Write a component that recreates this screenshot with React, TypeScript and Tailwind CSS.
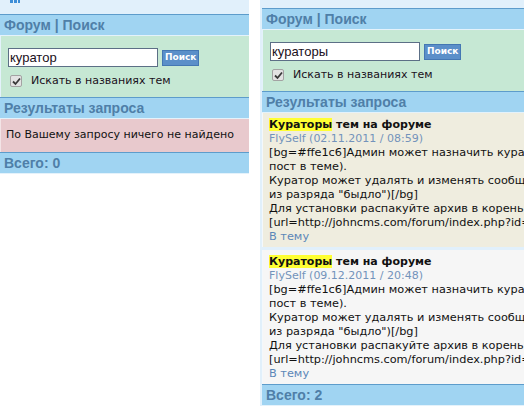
import React from 'react';

const FONT = { fontFamily: '"DejaVu Sans", Verdana, sans-serif' };
const ARIAL = { fontFamily: '"Liberation Sans", Arial, sans-serif' };

function Header({ children }: { children: React.ReactNode }) {
  return (
    <div
      className="h-[22px] flex items-center px-[4px] bg-[#a0d4f2] border-t border-t-[#5d9ccb] border-b border-b-[#e4f2fb] text-[14px] font-bold text-[#4f7fa8] whitespace-nowrap"
      style={ARIAL}
    >
      {children}
    </div>
  );
}

function CheckBox() {
  return (
    <span className="w-[12px] h-[12px] border border-[#a3a3a3] bg-[#e3e3e3] rounded-[2px] flex items-center justify-center shrink-0">
      <svg width="9" height="9" viewBox="0 0 9 9">
        <path d="M1 4.5 L3.5 7 L8 1.5" fill="none" stroke="#3a3a3a" strokeWidth="1.8" />
      </svg>
    </span>
  );
}

function SearchForm({ value }: { value: string }) {
  return (
    <div className="bg-[#c6e8d4] pt-[12px] pb-[10px] pl-[7px] border-l border-l-[#e4f2fb]">
      <div className="flex items-center gap-[4px]">
        <div
          className="w-[150px] h-[19px] border border-[#5c6f86] bg-white flex items-center px-[1px] text-[13px] text-[#1a1020]"
          style={ARIAL}
        >
          {value}
        </div>
        <button className="h-[16px] px-[2px] bg-[#5b8fc9] border border-[#4477b3] text-white text-[9px] font-bold leading-none">
          Поиск
        </button>
      </div>
      <div className="flex items-center gap-[9px] mt-[8px] pl-[2px] text-[11px] leading-[12px] text-[#1a1020]">
        <CheckBox />
        <span>Искать в названиях тем</span>
      </div>
    </div>
  );
}

const lines = [
  '[bg=#ffe1c6]Админ может назначить куратора темы',
  'пост в теме).',
  'Куратор может удалять и изменять сообщения',
  'из разряда "быдло")[/bg]',
  'Для установки распакуйте архив в корень сайта',
  '[url=http://johncms.com/forum/index.php?id=',
];

function ResultItem({ date, bg }: { date: string; bg: string }) {
  return (
    <div className={`${bg} px-[6px] pt-[4px] pb-[3px] border-l border-l-[#f4f8fb] text-[11.3px] leading-[14px] text-[#111]`}>
      <div className="font-bold text-[11px] leading-[15px] whitespace-nowrap">
        <span className="bg-[#ffff33]">Кураторы</span> тем на форуме
      </div>
      <div className="text-[#7393bb] text-[11px] whitespace-nowrap">FlySelf ({date})</div>
      {lines.map((l) => (
        <div key={l} className="whitespace-nowrap">{l}</div>
      ))}
      <div className="text-[#5b87b8]">В тему</div>
    </div>
  );
}

export default function App() {
  return (
    <div className="w-[524px] h-[411px] overflow-hidden bg-white flex items-start" style={FONT}>
      <div className="w-[249px] shrink-0 flex flex-col">
        <div className="h-[14px] bg-[#e1f0fb] flex items-start pl-[10px] gap-[1px]">
          <span className="w-[3px] h-[3px] bg-[#3d8ed8]" />
          <span className="w-[3px] h-[3px] bg-[#3d8ed8]" />
          <span className="w-[2px] h-[3px] bg-[#3d8ed8]" />
        </div>
        <Header>Форум | Поиск</Header>
        <SearchForm value="куратор" />
        <Header>Результаты запроса</Header>
        <div className="h-[33px] bg-[#e8c9cd] flex items-center px-[5px] text-[11px] text-[#111] whitespace-nowrap border-l border-l-[#f3e4e6]">
          По Вашему запросу ничего не найдено
        </div>
        <Header>Всего: 0</Header>
      </div>
      <div className="ml-[11px] w-[340px] shrink-0 bg-[#e1f0fb] pl-[2px] pt-[8px] flex flex-col">
        <Header>Форум | Поиск</Header>
        <SearchForm value="кураторы" />
        <Header>Результаты запроса</Header>
        <ResultItem date="02.11.2011 / 08:59" bg="bg-[#efeddf]" />
        <div className="h-[3px]" />
        <ResultItem date="09.12.2011 / 20:48" bg="bg-[#f6f6f6]" />
        <Header>Всего: 2</Header>
      </div>
    </div>
  );
}
